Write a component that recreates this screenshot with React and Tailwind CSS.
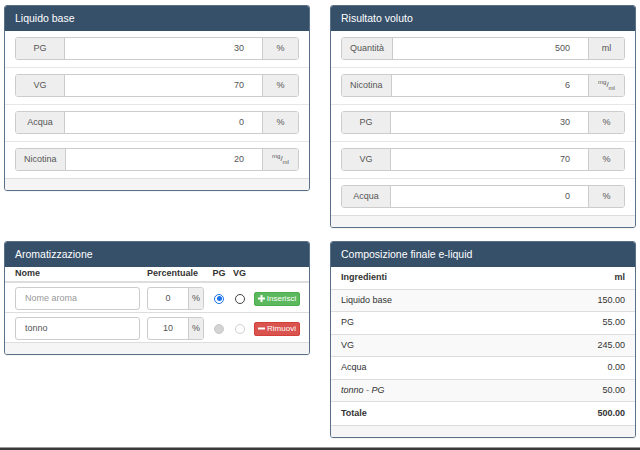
import React from 'react';

const font = { fontFamily: '"Liberation Sans", Arial, sans-serif' };

// small "mg/ml" unit label
const MgMl = () => (
  <span className="inline-flex items-start leading-none">
    <span className="text-[6px] -mt-[2px]">mg</span>
    <span className="text-[8px]">/</span>
    <span className="text-[6px] mt-[4px]">ml</span>
  </span>
);

const Panel = ({ title, children }) => (
  <div className="border border-[#5a7088] rounded-[3px] bg-white shadow-[0_1px_1px_rgba(0,0,0,0.05)] overflow-hidden">
    <div className="h-[25px] bg-[#36506a] text-white text-[10.5px] flex items-center pl-[10px]">{title}</div>
    {children}
    <div className="h-[12px] bg-[#f5f5f5] border-t border-[#ddd]" />
  </div>
);

const InputRow = ({ label, value, unit, last }) => (
  <div className={`px-[10px] pt-[6px] pb-[7px] ${last ? '' : 'border-b border-[#e7e7e7]'}`}>
    <div className="flex h-[23px] border border-[#ccc] rounded-[3px] overflow-hidden text-[9px] text-[#555]">
      <div className="min-w-[49px] px-[8px] bg-[#eee] border-r border-[#ccc] flex items-center justify-center">{label}</div>
      <div className="flex-1 bg-white flex items-center justify-end pr-[18px]">{value}</div>
      <div className="w-[36px] bg-[#eee] border-l border-[#ccc] flex items-center justify-center">{unit}</div>
    </div>
  </div>
);

const Radio = ({ checked, disabled }) => {
  if (disabled && checked) return <span className="block w-[10px] h-[10px] rounded-full bg-[#d4d4d4] border border-[#c8c8c8]" />;
  if (disabled) return <span className="block w-[10px] h-[10px] rounded-full border border-[#d0d0d0] bg-white" />;
  if (checked)
    return (
      <span className="flex w-[10px] h-[10px] rounded-full border-[1.5px] border-[#1a73e8] bg-white items-center justify-center">
        <span className="block w-[5px] h-[5px] rounded-full bg-[#1a73e8]" />
      </span>
    );
  return <span className="block w-[10px] h-[10px] rounded-full border border-[#444] bg-white" />;
};

const Btn = ({ kind, label }) => {
  const green = kind === 'add';
  return (
    <div
      className={`w-[46px] h-[14px] rounded-[2px] border flex items-center justify-center gap-[2px] text-white text-[8px] ${
        green ? 'bg-[#5cb85c] border-[#4cae4c]' : 'bg-[#d9534f] border-[#d43f3a]'
      }`}
    >
      <svg width="7" height="7" viewBox="0 0 7 7" fill="white">
        <rect x="0" y="2.5" width="7" height="2" />
        {green && <rect x="2.5" y="0" width="2" height="7" />}
      </svg>
      <span>{label}</span>
    </div>
  );
};

const FlavorRow = ({ name, placeholder, pct, disabled, last }) => (
  <div className={`flex items-center pl-[10px] pt-[4px] pb-[2px] ${last ? '' : 'border-b border-[#ddd]'}`}>
    <div className={`w-[125px] h-[23px] border border-[#ccc] rounded-[3px] flex items-center pl-[9px] text-[9px] ${placeholder ? 'text-[#999]' : 'text-[#555]'}`}>
      {name || placeholder}
    </div>
    <div className="ml-[7px] w-[57px] h-[23px] border border-[#ccc] rounded-[3px] flex overflow-hidden text-[9px] text-[#555]">
      <div className="flex-1 flex items-center justify-center">{pct}</div>
      <div className="w-[15px] bg-[#eee] border-l border-[#ccc] flex items-center justify-center">%</div>
    </div>
    <div className="ml-[5px] w-[20px] flex justify-center"><Radio checked disabled={disabled} /></div>
    <div className="w-[21px] flex justify-center"><Radio disabled={disabled} /></div>
    <div className="ml-[4px]"><Btn kind={disabled ? 'remove' : 'add'} label={disabled ? 'Rimuovi' : 'Inserisci'} /></div>
  </div>
);

const results = [
  { name: 'Liquido base', ml: '150.00', h: 'h-[22px]' },
  { name: 'PG', ml: '55.00', h: 'h-[23px]' },
  { name: 'VG', ml: '245.00', h: 'h-[22px]' },
  { name: 'Acqua', ml: '0.00', h: 'h-[23px]' },
  { name: 'tonno - PG', ml: '50.00', h: 'h-[22px]', italic: true },
];

export default function App() {
  return (
    <div className="w-[640px] h-[450px] bg-white flex flex-col text-[#333]" style={font}>
      <div className="flex-1 px-[4px] pt-[5px]">
        <div className="grid grid-cols-2 gap-x-[20px] items-start">
          <Panel title="Liquido base">
            <InputRow label="PG" value="30" unit="%" />
            <InputRow label="VG" value="70" unit="%" />
            <InputRow label="Acqua" value="0" unit="%" />
            <InputRow label="Nicotina" value="20" unit={<MgMl />} last />
          </Panel>
          <Panel title="Risultato voluto">
            <InputRow label="Quantità" value="500" unit="ml" />
            <InputRow label="Nicotina" value="6" unit={<MgMl />} />
            <InputRow label="PG" value="30" unit="%" />
            <InputRow label="VG" value="70" unit="%" />
            <InputRow label="Acqua" value="0" unit="%" last />
          </Panel>
        </div>

        <div className="grid grid-cols-2 gap-x-[20px] items-start mt-[13px]">
          <Panel title="Aromatizzazione">
            <div className="flex items-center h-[16px] pl-[10px] border-b-2 border-[#ddd] text-[9px] font-bold">
              <div className="w-[125px]">Nome</div>
              <div className="ml-[7px] w-[57px]">Percentuale</div>
              <div className="ml-[5px] w-[20px] text-center">PG</div>
              <div className="w-[21px] text-center">VG</div>
            </div>
            <FlavorRow placeholder="Nome aroma" pct="0" />
            <FlavorRow name="tonno" pct="10" disabled last />
          </Panel>

          <Panel title="Composizione finale e-liquid">
            <div className="h-[23px] px-[10px] flex items-center justify-between border-b border-[#ddd] text-[9px] font-bold">
              <span>Ingredienti</span>
              <span>ml</span>
            </div>
            {results.map((r, i) => (
              <div
                key={r.name}
                className={`${r.h} px-[10px] flex items-center justify-between border-b border-[#ddd] text-[9px] ${i % 2 === 0 ? 'bg-[#f9f9f9]' : 'bg-white'}`}
              >
                <span className={r.italic ? 'italic' : ''}>{r.name}</span>
                <span>{r.ml}</span>
              </div>
            ))}
            <div className="h-[23px] px-[10px] flex items-center justify-between text-[9px] font-bold">
              <span>Totale</span>
              <span>500.00</span>
            </div>
          </Panel>
        </div>
      </div>
      <div className="h-[3px] border-t border-[#999] bg-[#3a3a3a]" />
    </div>
  );
}
